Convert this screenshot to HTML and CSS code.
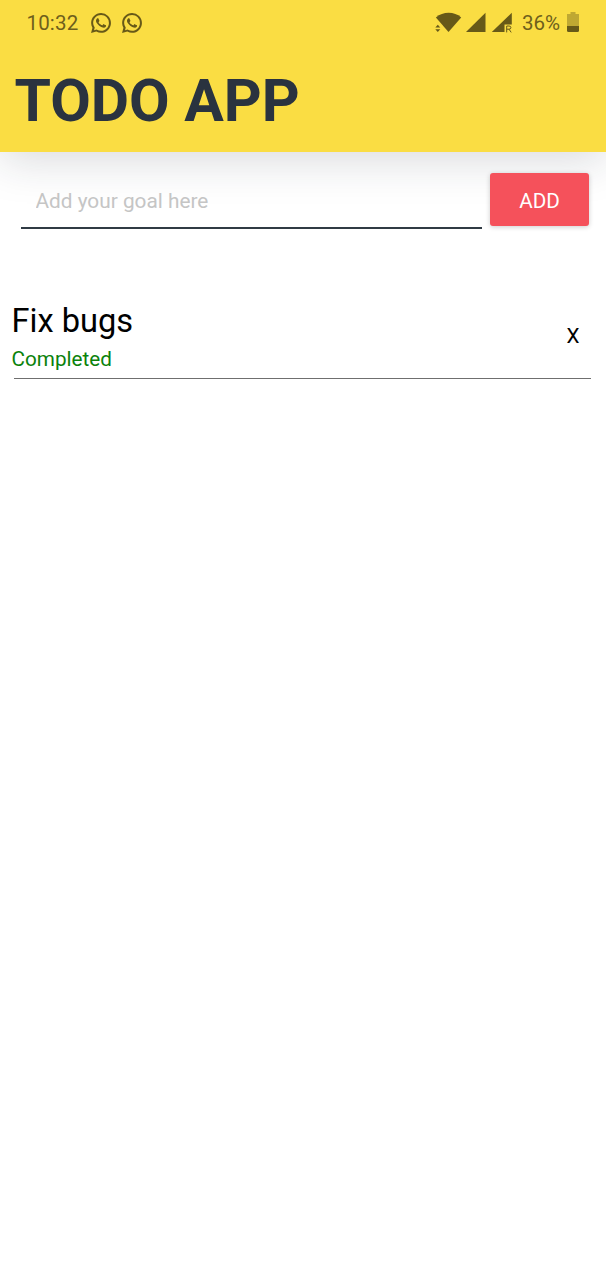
FILE: index.html
```html
<!DOCTYPE html>
<html lang="en">
<head>
<meta charset="utf-8">
<title>Todo App</title>
<link rel="stylesheet" href="styles.css">
</head>
<body>
<header class="header">
  <div class="status">
    <span class="time">10:32</span>
    <svg class="chat" viewBox="0 0 24 24"><path d="M12.04 2C6.58 2 2.13 6.45 2.13 11.91c0 1.75.46 3.45 1.32 4.95L2.05 22l5.25-1.38c1.45.79 3.08 1.21 4.74 1.21 5.46 0 9.91-4.45 9.91-9.91 0-2.65-1.03-5.14-2.9-7.01A9.82 9.82 0 0 0 12.04 2m.01 2c2.11 0 4.09.82 5.58 2.31a7.87 7.87 0 0 1 2.31 5.59c0 4.36-3.55 7.9-7.9 7.9-1.42 0-2.81-.38-4.02-1.1l-.29-.17-2.7.71.72-2.63-.19-.3A7.88 7.88 0 0 1 4.15 11.9C4.15 7.55 7.69 4 12.05 4M8.53 7.33c-.16 0-.43.06-.66.31-.22.25-.87.85-.87 2.07 0 1.22.89 2.39 1 2.56.14.17 1.76 2.67 4.25 3.73.59.27 1.05.42 1.41.53.59.19 1.13.16 1.56.1.48-.07 1.46-.6 1.67-1.18s.21-1.07.15-1.18c-.07-.1-.23-.16-.48-.27-.25-.14-1.47-.74-1.69-.82-.23-.08-.37-.12-.56.12-.16.25-.64.81-.78.97-.15.17-.29.19-.53.07-.26-.13-1.06-.39-2-1.23-.74-.66-1.23-1.47-1.38-1.72-.12-.24-.01-.39.11-.5.11-.11.27-.29.37-.44.13-.14.17-.25.25-.41.08-.17.04-.31-.02-.43-.06-.11-.56-1.35-.77-1.84-.2-.48-.4-.42-.56-.43-.14 0-.3-.01-.47-.01"/></svg>
    <svg class="chat" viewBox="0 0 24 24"><path d="M12.04 2C6.58 2 2.13 6.45 2.13 11.91c0 1.75.46 3.45 1.32 4.95L2.05 22l5.25-1.38c1.45.79 3.08 1.21 4.74 1.21 5.46 0 9.91-4.45 9.91-9.91 0-2.65-1.03-5.14-2.9-7.01A9.82 9.82 0 0 0 12.04 2m.01 2c2.11 0 4.09.82 5.58 2.31a7.87 7.87 0 0 1 2.31 5.59c0 4.36-3.55 7.9-7.9 7.9-1.42 0-2.81-.38-4.02-1.1l-.29-.17-2.7.71.72-2.63-.19-.3A7.88 7.88 0 0 1 4.15 11.9C4.15 7.55 7.69 4 12.05 4M8.53 7.33c-.16 0-.43.06-.66.31-.22.25-.87.85-.87 2.07 0 1.22.89 2.39 1 2.56.14.17 1.76 2.67 4.25 3.73.59.27 1.05.42 1.41.53.59.19 1.13.16 1.56.1.48-.07 1.46-.6 1.67-1.18s.21-1.07.15-1.18c-.07-.1-.23-.16-.48-.27-.25-.14-1.47-.74-1.69-.82-.23-.08-.37-.12-.56.12-.16.25-.64.81-.78.97-.15.17-.29.19-.53.07-.26-.13-1.06-.39-2-1.23-.74-.66-1.23-1.47-1.38-1.72-.12-.24-.01-.39.11-.5.11-.11.27-.29.37-.44.13-.14.17-.25.25-.41.08-.17.04-.31-.02-.43-.06-.11-.56-1.35-.77-1.84-.2-.48-.4-.42-.56-.43-.14 0-.3-.01-.47-.01"/></svg>
    <svg class="radio" viewBox="0 0 80 24">
      <path d="M.9 5.500C8-.700 19.300-.700 26.200 5.500L13.500 20Z"/>
      <path d="M.3 15.500L2.800 12.700L5.300 15.500ZM.3 17.300L2.800 20.100L5.300 17.300Z"/>
      <path d="M50.500 .800V20H31Z"/>
      <path d="M76.800 .800V12.500H69.500V20H56.800Z"/>
      <path d="M71.700 20.400V14H74Q75.900 14 75.900 15.600T74 17.200H71.700M74 17.200L76.200 20.400" class="roam"/>
    </svg>
    <span class="percent">36%</span>
    <svg class="battery" viewBox="0 0 12 20"><path d="M3.500 0h5v2H12v12H0V2h3.500z" opacity=".4"/><path d="M0 14h12v4.500Q12 20 10.500 20h-9Q0 20 0 18.500z"/></svg>
  </div>
  <h1 class="title">TODO APP</h1>
</header>
<main>
  <form class="entry">
    <input class="goal" type="text" placeholder="Add your goal here">
    <button class="add" type="button">ADD</button>
  </form>
  <ul class="list">
    <li class="item">
      <div class="details">
        <div class="name">Fix bugs</div>
        <div class="state">Completed</div>
      </div>
      <button class="remove" type="button">X</button>
    </li>
  </ul>
</main>
</body>
</html>
```
FILE: styles.css
```css
* { box-sizing: border-box; }
body { margin: 0; min-height: 1280px; background: #fff; color: #000; font-family: Roboto, sans-serif; }
button, input { font-family: inherit; margin: 0; }
.header { height: 152px; background: #fadd43; box-shadow: 0 8px 42px rgba(30, 38, 55, .17); }
.status { height: 46px; display: flex; align-items: center; padding: 0 27px 0 26px; color: #6e5f1c; font-size: 20.500px; line-height: 46px; }
.status svg { display: block; flex: none; fill: #675918; }
.time { width: 63px; padding-left: .5px; letter-spacing: .15px; }
.chat { width: 24px; height: 24px; margin-right: 7px; }
.status .radio { width: 80px; height: 24px; margin: 2px 7px 0 auto; }
.status .roam { fill: none; stroke: #675918; stroke-width: 1; }
.percent { width: 45px; }
.status .battery { width: 12px; height: 20px; margin-top: -2px; }
.title { margin: 0; padding-left: 14.500px; font-size: 58.900px; line-height: 110px; font-weight: 700; color: #2a333f; }
.entry { display: flex; align-items: flex-start; gap: 8px; padding: 21px 17px 0 21px; }
.goal { flex: 1; min-width: 0; height: 56px; padding: 2px 15px 0 14.500px; border: 0; border-bottom: 2px solid #303b44; background: transparent; font-size: 20.800px; outline: 0; }
.goal::placeholder { color: #c5c5c5; opacity: 1; }
.add { width: 99px; height: 53px; padding: 2px 0 0; border: 0; border-radius: 3px; background: #f5515b; color: #fff; font-size: 20.700px; box-shadow: 0 1px 5px rgba(0, 0, 0, .2); }
.list { list-style: none; margin: 0; padding: 70px 15px 0 14px; }
.item { display: flex; justify-content: space-between; height: 80px; border-bottom: 1px solid #6f6f6f; }
.details { margin-left: -2.500px; }
.name { font-size: 32.600px; line-height: 44px; }
.state { font-size: 20.700px; line-height: 32px; color: #0b820b; }
.remove { align-self: flex-start; width: 36px; height: 74px; padding: 0; border: 0; background: none; color: #000; font-size: 20.700px; }
```
